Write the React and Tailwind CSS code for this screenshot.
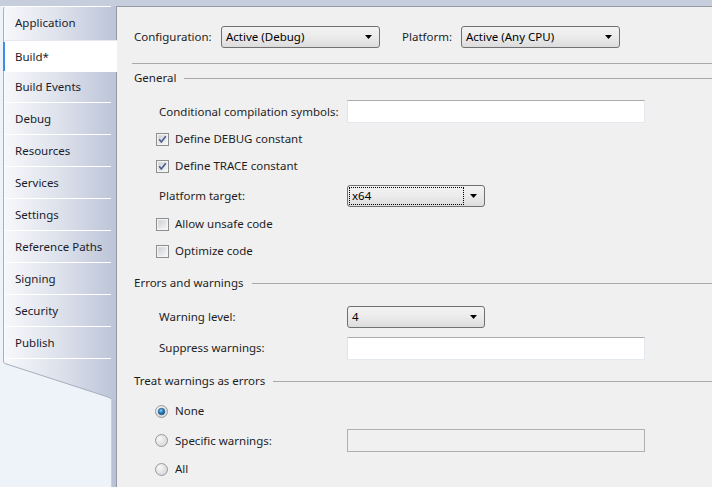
import React from 'react';

const tabs = [
  'Application',
  'Build*',
  'Build Events',
  'Debug',
  'Resources',
  'Services',
  'Settings',
  'Reference Paths',
  'Signing',
  'Security',
  'Publish',
];

function Tab({ label, active }) {
  if (active) {
    return (
      <div className="relative h-[32px] w-[113px] flex items-center pl-[11px] bg-white border-t border-[#e6e9f0] mt-[2px] -mb-[2px]">
        <div className="absolute left-[-1px] top-[1px] bottom-[1px] w-[2px] bg-[#3d8ee8]" />
        {label}
      </div>
    );
  }
  return (
    <div className="h-[32px] w-[107px] flex items-center pl-[11px] border-t border-white">
      {label}
    </div>
  );
}

function Sidebar() {
  return (
    <div className="w-[116px] flex flex-col bg-[#c6cddd]">
      <div className="h-[6px]" />
      <div className="flex-1 flex flex-col bg-[#eef2f9]">
        <div className="ml-[3px] w-[113px] rounded-tl-[4px] border-l border-[#a8b1c4] bg-gradient-to-r from-[#f7f8fb] via-[#dde1eb] to-[#bcc4d8] text-[#1b1b2b]">
          {tabs.map((t) => (
            <Tab key={t} label={t} active={t === 'Build*'} />
          ))}
          <div className="h-[4px] w-[107px] border-t border-white" />
        </div>
        <svg width="116" height="38" className="block -mt-px">
          <defs>
            <linearGradient id="tabg" x1="0" x2="1" y1="0" y2="0">
              <stop offset="0" stopColor="#f7f8fb" />
              <stop offset="0.5" stopColor="#dde1eb" />
              <stop offset="1" stopColor="#bcc4d8" />
            </linearGradient>
          </defs>
          <rect x="3" y="0" width="113" height="38" fill="url(#tabg)" />
          <path d="M0 0 H3.5 V1 Q4 3 8 3.5 L108 36 Q110.5 37 111 38 H0 Z" fill="#eef2f9" />
          <path d="M3.5 0 V1 Q4 3 8 3.5 L108 36 Q110.5 37 111 38" fill="none" stroke="#a6aec0" strokeWidth="1" />
        </svg>
        <div className="flex-1 flex">
          <div className="w-[111px]" />
          <div className="flex-1 border-l border-[#c9cfdc] bg-[#bac2d6]" />
        </div>
      </div>
    </div>
  );
}

function Dropdown({ value, width, focused }) {
  return (
    <div
      className={`relative h-[22px] ${width} rounded-[3px] border border-[#707070] bg-gradient-to-b from-[#f3f3f3] via-[#ebebeb] to-[#dcdcdc] flex items-center`}
    >
      {focused ? (
        <div className="absolute left-[1px] top-[1px] bottom-[1px] right-[20px] border border-dotted border-black" />
      ) : null}
      <span className="pl-[4px] text-[#000]">{value}</span>
      <svg width="7" height="4" className="absolute right-[7px] top-[8px]">
        <path d="M0 0 H7 L3.5 4 Z" fill="#000" />
      </svg>
    </div>
  );
}

function TextBox({ disabled }) {
  return (
    <div
      className={`h-[23px] w-[298px] border ${
        disabled
          ? 'bg-[#f0f0f0] border-[#afafaf] border-t-[#adb2b5]'
          : 'bg-white border-[#e3e9ef] border-t-[#abadb3] border-l-[#e2e3ea]'
      }`}
    />
  );
}

function Checkbox({ checked, label }) {
  return (
    <div className="flex items-center ml-[22px] h-[16px]">
      <svg width="13" height="13" className="block">
        <defs>
          <linearGradient id="cbg" x1="0" y1="0" x2="1" y2="1">
            <stop offset="0" stopColor="#cbcfd5" />
            <stop offset="1" stopColor="#f6f6f6" />
          </linearGradient>
        </defs>
        <rect x="0.5" y="0.5" width="12" height="12" fill="#f4f4f4" stroke="#8e8f8f" />
        <rect x="2" y="2" width="9" height="9" fill="url(#cbg)" stroke="#f4f4f4" strokeWidth="0.5" />
        {checked ? (
          <path d="M3.2 6.3 L5.3 9 L9.8 3.2" fill="none" stroke="#4a5d8f" strokeWidth="1.6" />
        ) : null}
      </svg>
      <span className="ml-[6px]">{label}</span>
    </div>
  );
}

function Radio({ checked }) {
  return (
    <svg width="13" height="13" className="block">
      <defs>
        <radialGradient id="rbg" cx="0.35" cy="0.35" r="0.7">
          <stop offset="0" stopColor="#f8f8f8" />
          <stop offset="1" stopColor="#d4d6d9" />
        </radialGradient>
        <radialGradient id="rdot" cx="0.4" cy="0.35" r="0.7">
          <stop offset="0" stopColor="#8ad0f7" />
          <stop offset="0.5" stopColor="#2a7fbf" />
          <stop offset="1" stopColor="#124c79" />
        </radialGradient>
      </defs>
      <circle cx="6.5" cy="6.5" r="6" fill="url(#rbg)" stroke="#9a9a9a" />
      {checked ? <circle cx="6.5" cy="6.5" r="3.3" fill="url(#rdot)" stroke="#184f7d" strokeWidth="0.6" /> : null}
    </svg>
  );
}

function GroupHeader({ title }) {
  return (
    <div className="flex items-center h-[16px]">
      <span>{title}</span>
      <div className="flex-1 h-px bg-[#a9a9a9] ml-[8px]" />
    </div>
  );
}

function Label({ children }) {
  return <div className="w-[188px] ml-[25px]">{children}</div>;
}

export default function App() {
  return (
    <div className="w-[712px] h-[487px] flex overflow-hidden font-['Noto_Sans',sans-serif] text-[11.5px] leading-none text-[#1e1e1e]">
      <Sidebar />
      <div className="flex-1 flex flex-col bg-[#c6cddd]">
        <div className="h-[6px]" />
        <div className="flex-1 flex flex-col bg-[#f0f0f0] border-l border-t border-[#969aa4] pl-[17px]">
          <div className="flex items-center h-[22px] mt-[19px]">
            <div className="w-[87px]">Configuration:</div>
            <Dropdown value="Active (Debug)" width="w-[159px]" />
            <div className="w-[59px] ml-[22px]">Platform:</div>
            <Dropdown value="Active (Any CPU)" width="w-[159px]" />
          </div>
          <div className="h-px bg-[#a9a9a9] mt-[15px] -ml-[2px]" />

          <div className="mt-[6px]">
            <GroupHeader title="General" />
          </div>
          <div className="flex items-center h-[23px] mt-[14px]">
            <Label>Conditional compilation symbols:</Label>
            <TextBox />
          </div>
          <div className="mt-[8px]">
            <Checkbox checked label="Define DEBUG constant" />
          </div>
          <div className="mt-[11px]">
            <Checkbox checked label="Define TRACE constant" />
          </div>
          <div className="flex items-center h-[22px] mt-[11px]">
            <Label>Platform target:</Label>
            <Dropdown value="x64" width="w-[138px]" focused />
          </div>
          <div className="mt-[9px]">
            <Checkbox label="Allow unsafe code" />
          </div>
          <div className="mt-[11px]">
            <Checkbox label="Optimize code" />
          </div>

          <div className="mt-[16px]">
            <GroupHeader title="Errors and warnings" />
          </div>
          <div className="flex items-center h-[22px] mt-[15px]">
            <Label>Warning level:</Label>
            <Dropdown value="4" width="w-[138px]" />
          </div>
          <div className="flex items-center h-[22px] mt-[9px]">
            <Label>Suppress warnings:</Label>
            <TextBox />
          </div>

          <div className="mt-[14px]">
            <GroupHeader title="Treat warnings as errors" />
          </div>
          <div className="flex items-center h-[16px] mt-[14px] ml-[21px]">
            <Radio checked />
            <span className="ml-[7px]">None</span>
          </div>
          <div className="flex items-center h-[23px] mt-[10px] ml-[21px]">
            <Radio />
            <span className="ml-[7px] w-[172px]">Specific warnings:</span>
            <TextBox disabled />
          </div>
          <div className="flex items-center h-[16px] mt-[9px] ml-[21px]">
            <Radio />
            <span className="ml-[7px]">All</span>
          </div>
        </div>
      </div>
    </div>
  );
}
